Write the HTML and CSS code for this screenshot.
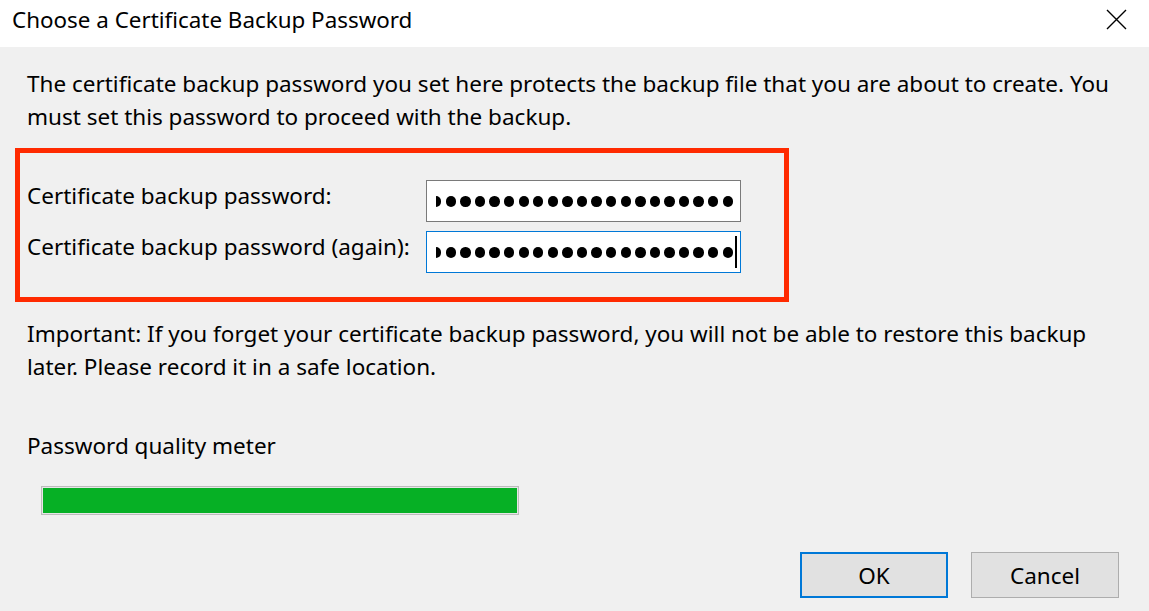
FILE: index.html
```html
<!DOCTYPE html>
<html>
<head>
<meta charset="utf-8">
<title>Choose a Certificate Backup Password</title>
<link rel="stylesheet" href="styles.css">
</head>
<body>
<div class="dialog">
  <div class="titlebar">
    <span class="title">Choose a Certificate Backup Password</span>
    <span class="close" aria-label="Close">
      <svg width="21" height="21" viewBox="0 0 21 21"><path d="M1 1 L20 20 M20 1 L1 20" stroke="#000" stroke-width="1.4" fill="none"/></svg>
    </span>
  </div>
  <div class="content">
    <p class="para">The certificate backup password you set here protects the backup file that you are about to create. You<br>must set this password to proceed with the backup.</p>
    <div class="highlight">
      <div class="field-row">
        <label class="label">Certificate backup password:</label>
        <div class="input">
          <div class="dots"><i></i><i></i><i></i><i></i><i></i><i></i><i></i><i></i><i></i><i></i><i></i><i></i><i></i><i></i><i></i><i></i><i></i><i></i><i></i><i></i><i></i><i></i><i></i></div>
        </div>
      </div>
      <div class="field-row">
        <label class="label">Certificate backup password (again):</label>
        <div class="input focused">
          <div class="dots"><i></i><i></i><i></i><i></i><i></i><i></i><i></i><i></i><i></i><i></i><i></i><i></i><i></i><i></i><i></i><i></i><i></i><i></i><i></i><i></i><i></i><i></i><i></i></div>
          <span class="caret"></span>
        </div>
      </div>
    </div>
    <p class="para important">Important: If you forget your certificate backup password, you will not be able to restore this backup<br>later. Please record it in a safe location.</p>
    <p class="meter-label">Password quality meter</p>
    <div class="meter"><div class="meter-fill" style="width:100%"></div></div>
    <div class="buttons">
      <button class="btn default">OK</button>
      <button class="btn">Cancel</button>
    </div>
  </div>
</div>
</body>
</html>
```
FILE: styles.css
```css
html, body {
  margin: 0;
  padding: 0;
  background: #f0f0f0;
}
body {
  font-family: "Noto Sans", "Open Sans", sans-serif;
  color: #000;
  font-size: 22.5px;
}
.dialog {
  width: 1149px;
  height: 611px;
  display: flex;
  flex-direction: column;
  overflow: hidden;
}
.titlebar {
  height: 47px;
  background: #fff;
  display: flex;
  align-items: center;
  justify-content: space-between;
  padding: 0 22px 0 12px;
  box-sizing: border-box;
  flex: none;
}
.title {
  font-size: 22.4px;
  line-height: 40px;
  margin-top: -7px;
}
.close {
  display: flex;
  width: 21px;
  height: 21px;
  margin-top: -9px;
}
.content {
  display: flex;
  flex-direction: column;
  padding: 20px 30px 0 15px;
}
.para {
  margin: 0 0 0 12px;
  line-height: 33px;
  white-space: nowrap;
}
.highlight {
  margin-top: 15px;
  width: 774px;
  box-sizing: border-box;
  border: 5px solid #ff2a00;
  padding: 27px 0 24px 7px;
  display: flex;
  flex-direction: column;
  gap: 9px;
}
.field-row {
  display: grid;
  grid-template-columns: 399px 315px;
  align-items: start;
}
.label {
  line-height: 33px;
  margin-top: -1px;
  white-space: nowrap;
}
.input {
  height: 42px;
  box-sizing: border-box;
  border: 1px solid #7a7a7a;
  background: #fff;
  display: flex;
  align-items: center;
  padding: 0 7px 0 9px;
}
.input.focused {
  border-color: #0078d7;
  padding-right: 3px;
}
.dots {
  flex: 1;
  overflow: hidden;
  display: flex;
  justify-content: flex-end;
  gap: 4.2px;
  min-width: 0;
}
.dots i {
  flex: none;
  width: 10.4px;
  height: 10.4px;
  border-radius: 50%;
  background: #000;
  margin-top: 1px;
}
.caret {
  flex: none;
  width: 2px;
  height: 32px;
  background: #000;
  margin-left: 2px;
}
.important {
  margin-top: 15px;
}
.meter-label {
  margin: 46px 0 0 12px;
  line-height: 33px;
}
.meter {
  margin: 24px 0 0 26px;
  width: 478px;
  height: 29px;
  box-sizing: border-box;
  border: 1px solid #bcbcbc;
  padding: 1px;
  background: #e6e6e6;
}
.meter-fill {
  height: 100%;
  background: #06b025;
}
.buttons {
  margin-top: 37px;
  display: flex;
  justify-content: flex-end;
  gap: 23px;
}
.btn {
  width: 148px;
  height: 46px;
  box-sizing: border-box;
  background: #e1e1e1;
  border: 1px solid #adadad;
  font-family: inherit;
  font-size: 22.5px;
  color: #000;
  padding: 0;
  margin: 0;
}
.btn.default {
  border: 2px solid #0078d7;
}
```
